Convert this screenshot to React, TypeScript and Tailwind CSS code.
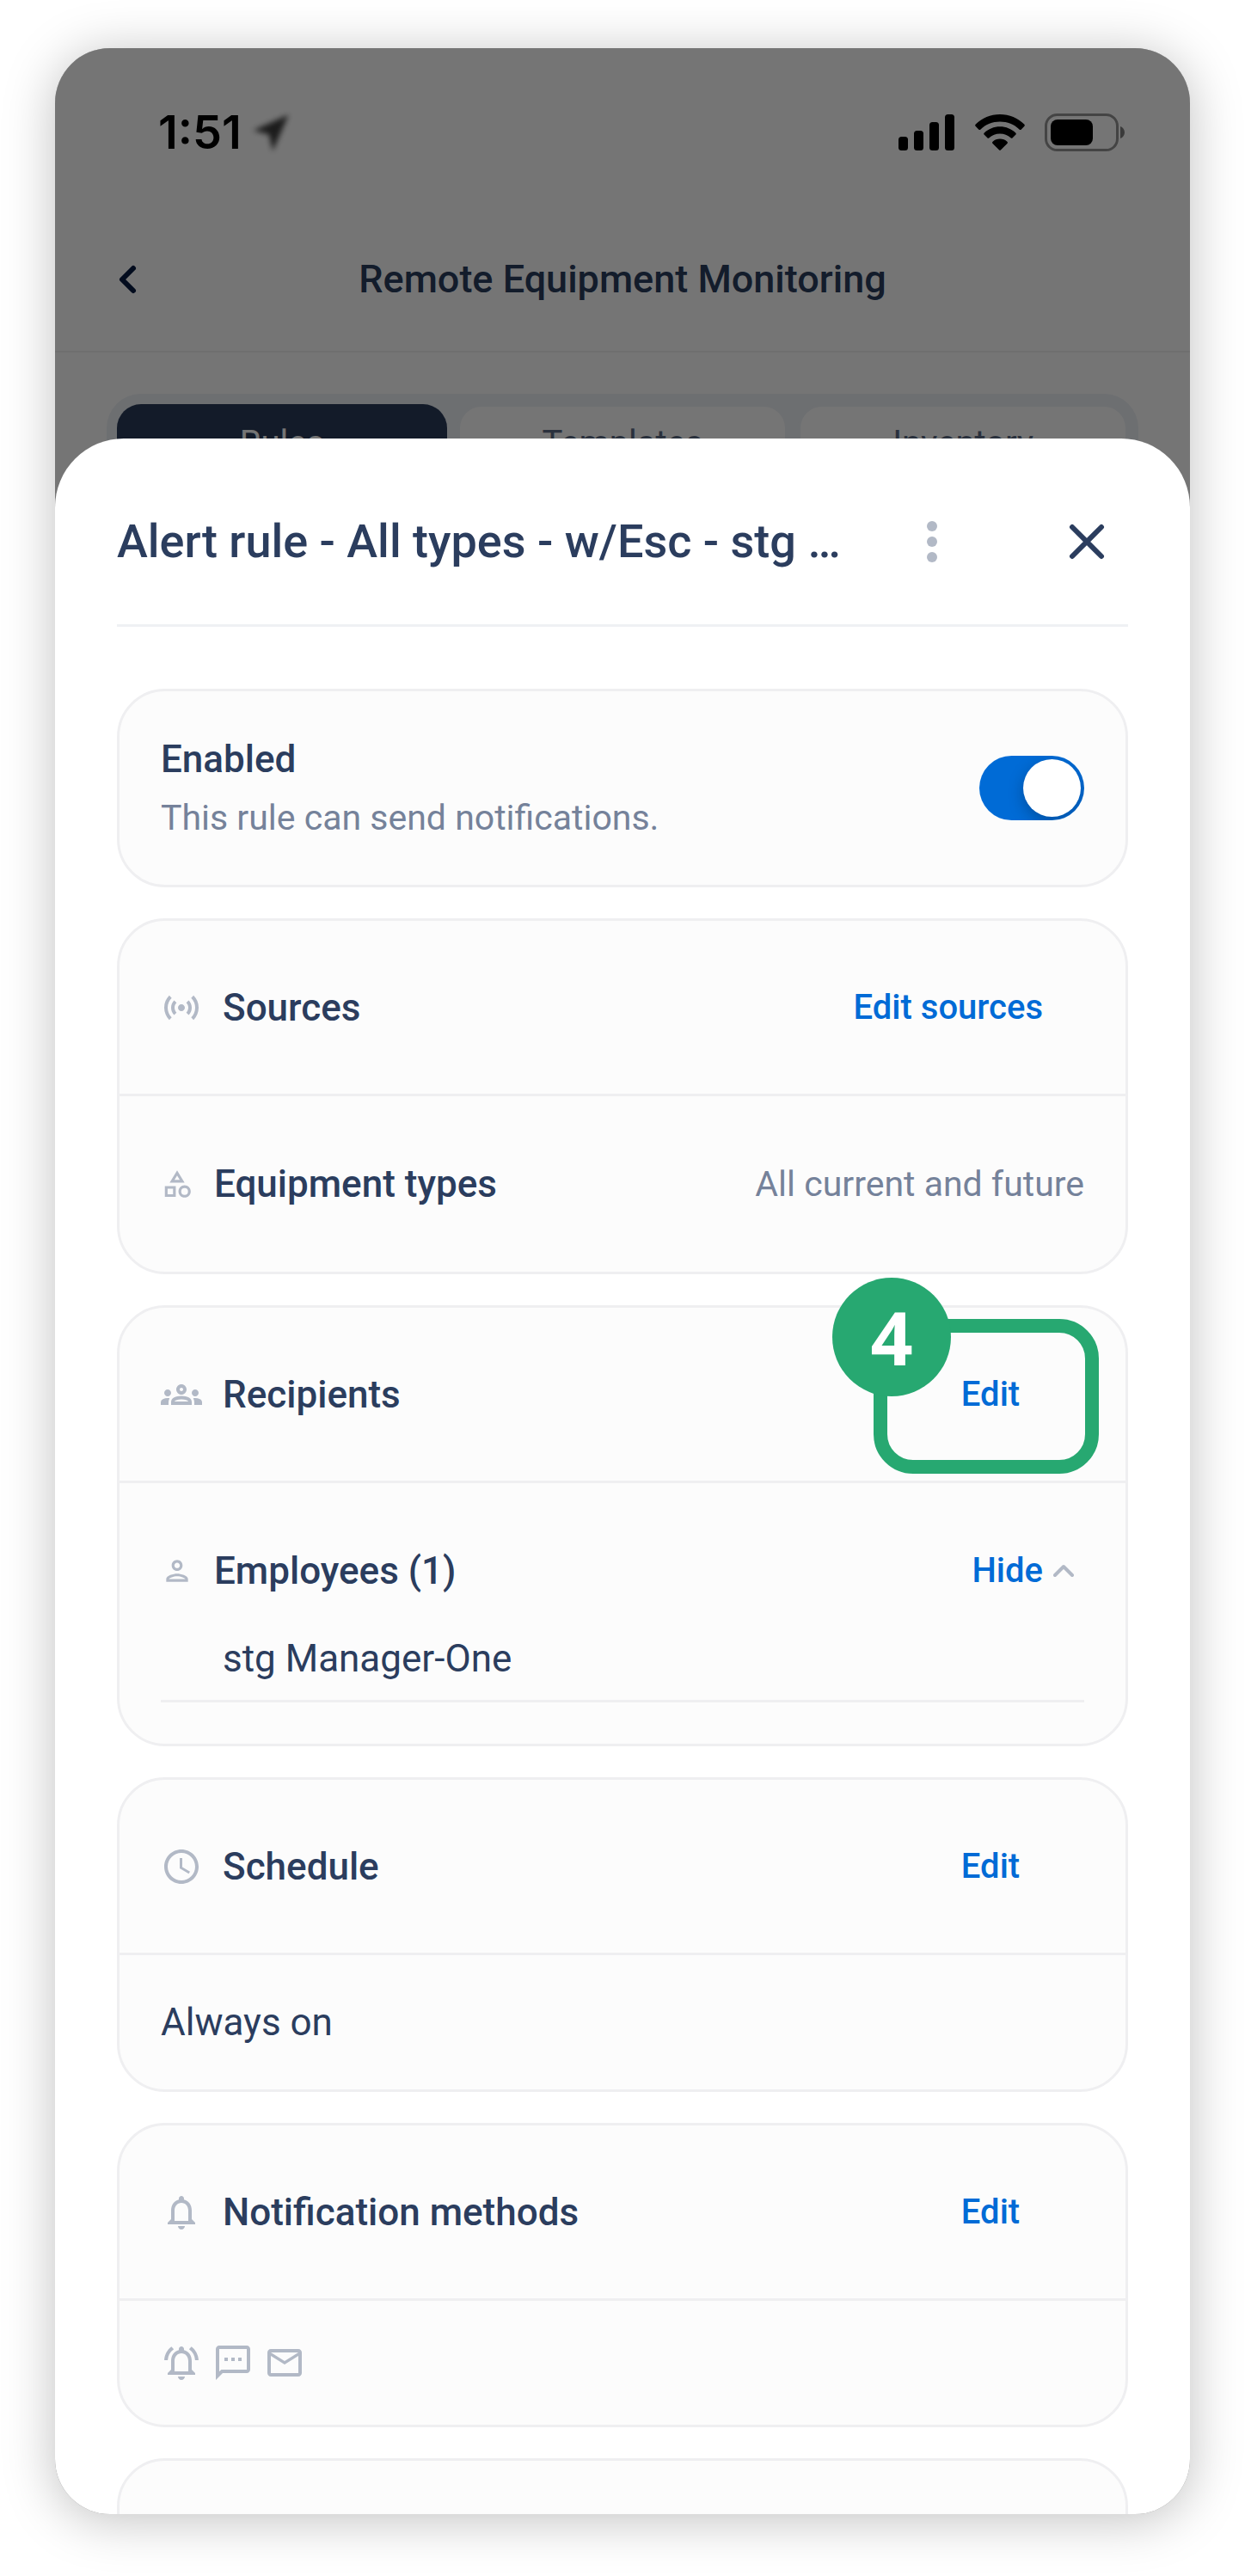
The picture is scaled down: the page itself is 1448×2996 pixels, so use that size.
import { useState } from "react"
import type { ReactNode } from "react"
import {
  MdMailOutline,
  MdOutlineCategory,
  MdOutlineGroups,
  MdOutlineNotifications,
  MdOutlineNotificationsActive,
  MdOutlinePerson,
  MdOutlineSms,
  MdSchedule,
  MdSensors,
} from "react-icons/md"

/** iOS status bar: clock and location arrow on the left, signal / wifi / battery on the right */
function StatusBar() {
  return (
    <div className="flex items-center justify-between pt-[66px] pl-[120px] pr-[75px] h-[130px]">
      <div className="flex items-center gap-2">
        <span className="font-['Inter',sans-serif] text-[54px] leading-[64px] font-semibold text-black">1:51</span>
        <svg viewBox="0 0 48 48" className="size-[52px] blur-[3px]" aria-hidden>
          <path d="M43 5L5 22l17 4 4 18z" fill="#0c0c0c" fillOpacity="0.8" />
        </svg>
      </div>
      <div className="flex items-center gap-[23px]">
        <svg viewBox="0 0 66 42" className="h-[42px] w-[66px]" aria-hidden>
          <rect x="0" y="26" width="11" height="16" rx="3.5" />
          <rect x="18" y="19" width="11" height="23" rx="3.5" />
          <rect x="36" y="9" width="11" height="33" rx="3.5" />
          <rect x="54" y="0" width="11" height="42" rx="3.5" />
        </svg>
        <svg viewBox="0 0 58 42" className="h-[42px] w-[58px]" aria-hidden>
          <path d="M29 0C18 0 8 4.300 .8 11.500c-.8.800-.8 1.700 0 2.500l3.400 3.500c.7.700 1.600.7 2.300 0C12.500 11.800 20.400 8.600 29 8.600s16.500 3.200 22.500 8.900c.7.700 1.600.7 2.300 0l3.400-3.500c.8-.8.8-1.700 0-2.500C50 4.300 40 0 29 0z" />
          <path d="M29 14.200c-7 0-13.400 2.700-18.200 7.200-.8.700-.8 1.600 0 2.400l3.500 3.500c.7.700 1.500.7 2.200 0 3.300-3 7.700-4.800 12.500-4.800s9.200 1.800 12.500 4.800c.7.700 1.500.7 2.200 0l3.500-3.500c.8-.8.8-1.700 0-2.400-4.800-4.500-11.200-7.200-18.200-7.200z" />
          <path d="M29 28.500c-3.200 0-6.200 1.200-8.400 3.200-.7.700-.7 1.500 0 2.200l7.300 7.300c.7.700 1.500.7 2.200 0l7.300-7.300c.7-.7.7-1.500 0-2.200-2.200-2-5.200-3.200-8.400-3.200z" />
        </svg>
        <svg viewBox="0 0 94 44" className="h-[44px] w-[94px]" aria-hidden>
          <rect x="1.500" y="1.500" width="83" height="41" rx="13" fill="none" stroke="#000" strokeOpacity="0.42" strokeWidth="3" />
          <rect x="7" y="7" width="49" height="30" rx="8" />
          <path d="M88 15c3 1 5 4 5 7s-2 6-5 7z" fillOpacity="0.5" />
        </svg>
      </div>
    </div>
  )
}

const tabs = ["Rules", "Templates", "Inventory"]

/** The screen below the sheet, dimmed by the backdrop */
function DimmedScreen() {
  return (
    <div className="relative shrink-0 bg-white">
      <StatusBar />
      <header className="grid grid-cols-[56px_1fr_56px] items-center h-[224px] px-14 pt-14 border-b-2 border-[#f1f1f1]">
        <button type="button" aria-label="Back" className="flex items-center justify-center">
          <svg viewBox="0 0 24 36" className="h-9 w-6" fill="none" stroke="#071b43" strokeWidth="6" strokeLinecap="round" strokeLinejoin="round" aria-hidden>
            <path d="M19 5L6 18l13 13" />
          </svg>
        </button>
        <h1 className="text-center text-[45px] leading-[56px] font-medium">Remote Equipment Monitoring</h1>
      </header>
      <nav className="mx-[60px] mt-12 grid grid-cols-3 gap-3 rounded-[40px] bg-[#edf1f6] p-3">
        {tabs.map((tab) => (
          <button
            key={tab}
            type="button"
            className={
              tab === "Rules"
                ? "h-[92px] rounded-[28px] bg-[#2b3c5b] text-[40px] leading-[48px] text-white"
                : "h-[92px] rounded-[28px] border-[3px] border-[#edf1f6] bg-white text-[40px] leading-[48px] text-[#5d6c86]"
            }
          >
            {tab}
          </button>
        ))}
      </nav>
      <div className="absolute inset-0 bg-black/54" aria-hidden />
    </div>
  )
}

function Card({ children }: { children?: ReactNode }) {
  return (
    <section className="shrink-0 rounded-[56px] border-[3px] border-[#efeff1] bg-[#fcfcfc]">{children}</section>
  )
}

function CardHeader({ icon, title, action }: { icon: ReactNode; title: string; action: ReactNode }) {
  return (
    <div className="flex h-[204px] items-center justify-between border-b-[3px] border-[#efeff1] px-12">
      <div className="flex items-center gap-6">
        <span className="text-5xl text-[#b2b9c6]">{icon}</span>
        <h3 className="text-[44px] leading-[56px] font-medium">{title}</h3>
      </div>
      {action}
    </div>
  )
}

function TextButton({ children }: { children: ReactNode }) {
  return (
    <button type="button" className="min-w-[218px] px-12 text-[40px] leading-[56px] font-medium text-[#006bd6]">
      {children}
    </button>
  )
}

function SubTitle({ icon, children }: { icon: ReactNode; children: ReactNode }) {
  return (
    <div className="flex items-center gap-6">
      <span className="text-[38px] text-[#b2b9c6]">{icon}</span>
      <h4 className="text-[44px] leading-[56px] font-medium">{children}</h4>
    </div>
  )
}

/** Numbered walkthrough marker drawn around a control */
function StepCallout({ step, children }: { step: number; children: ReactNode }) {
  return (
    <div className="relative">
      {children}
      <div className="pointer-events-none absolute -top-[60px] -right-[17px] h-[180px] w-[262px] rounded-[46px] border-[16px] border-[#27a871]" />
      <div className="pointer-events-none absolute -top-[108px] right-[155px] flex size-[138px] items-center justify-center rounded-full bg-[#27a871] font-['Open_Sans',sans-serif] text-[86px] leading-none font-bold text-white">
        {step}
      </div>
    </div>
  )
}

export default function App() {
  const [enabled, setEnabled] = useState(true)
  const [showEmployees, setShowEmployees] = useState(true)

  return (
    <div className="h-screen bg-white px-16 pt-14 pb-[72px] font-['Roboto',sans-serif] text-[#2b3d5e]">
      <main className="flex h-full flex-col overflow-hidden rounded-[64px] bg-[#757575] shadow-[0_6px_60px_rgba(0,0,0,0.25)]">
        <DimmedScreen />

        <div className="relative -mt-16 flex min-h-0 flex-1 flex-col overflow-hidden rounded-t-[80px] bg-white px-[72px]">
          <div className="flex h-[219px] shrink-0 items-center justify-between border-b-[3px] border-[#eff1f4] pt-6">
            <h2 className="text-[54px] leading-[64px] font-medium">Alert rule - All types - w/Esc - stg …</h2>
            <div className="flex items-center gap-[150px] pr-6">
              <button type="button" aria-label="More options">
                <svg viewBox="0 0 12 48" className="h-12 w-3" fill="#b2b9c6" aria-hidden>
                  <circle cx="6" cy="6" r="6" />
                  <circle cx="6" cy="24" r="6" />
                  <circle cx="6" cy="42" r="6" />
                </svg>
              </button>
              <button type="button" aria-label="Close">
                <svg viewBox="0 0 48 48" className="size-12" fill="none" stroke="#2b3d5e" strokeWidth="6" strokeLinecap="round" aria-hidden>
                  <path d="M7 7l34 34M41 7L7 41" />
                </svg>
              </button>
            </div>
          </div>

          <div className="flex flex-col gap-9 pt-[72px]">
            <Card>
              <div className="flex h-[225px] items-center justify-between px-12">
                <div>
                  <label htmlFor="rule-enabled" className="block text-[44px] leading-[56px] font-medium">
                    Enabled
                  </label>
                  <p className="mt-3 text-[41px] leading-[56px] text-[#75829a]">This rule can send notifications.</p>
                </div>
                <div className="relative h-[75px] w-[122px] overflow-hidden rounded-full">
                  <input
                    id="rule-enabled"
                    type="checkbox"
                    role="switch"
                    checked={enabled}
                    onChange={(e) => setEnabled(e.target.checked)}
                    className="peer block size-full cursor-pointer appearance-none bg-[#b2b9c6] checked:bg-[#006bd6]"
                  />
                  <span className="pointer-events-none absolute top-1 left-1 size-[67px] rounded-full bg-white shadow-[0_6px_18px_rgba(0,0,0,0.25)] peer-checked:left-[51px]" />
                </div>
              </div>
            </Card>

            <Card>
              <CardHeader icon={<MdSensors />} title="Sources" action={<TextButton>Edit sources</TextButton>} />
              <div className="flex h-[204px] items-center justify-between px-12">
                <SubTitle icon={<MdOutlineCategory />}>Equipment types</SubTitle>
                <p className="text-[41px] leading-[56px] text-[#75829a]">All current and future</p>
              </div>
            </Card>

            <Card>
              <CardHeader
                icon={<MdOutlineGroups />}
                title="Recipients"
                action={
                  <StepCallout step={4}>
                    <TextButton>Edit</TextButton>
                  </StepCallout>
                }
              />
              <div className="px-12 pt-[74px] pb-12">
                <div className="flex items-center justify-between">
                  <SubTitle icon={<MdOutlinePerson />}>Employees (1)</SubTitle>
                  <button
                    type="button"
                    aria-expanded={showEmployees}
                    onClick={() => setShowEmployees(!showEmployees)}
                    className="flex items-center gap-3 pr-3 text-[40px] leading-[56px] font-medium text-[#006bd6]"
                  >
                    {showEmployees ? "Hide" : "Show"}
                    <svg viewBox="0 0 24 16" className="h-4 w-6" fill="none" stroke="#b2b9c6" strokeWidth="4" strokeLinecap="round" strokeLinejoin="round" aria-hidden>
                      <path d={showEmployees ? "M2 13l10-10 10 10" : "M2 3l10 10 10-10"} />
                    </svg>
                  </button>
                </div>
                {showEmployees && (
                  <ul className="mt-[46px]">
                    <li className="border-b-[3px] border-[#efeff1] pb-5 pl-[72px] text-[44px] leading-[56px]">stg Manager-One</li>
                  </ul>
                )}
              </div>
            </Card>

            <Card>
              <CardHeader icon={<MdSchedule />} title="Schedule" action={<TextButton>Edit</TextButton>} />
              <p className="px-12 py-[50px] text-[44px] leading-[56px]">Always on</p>
            </Card>

            <Card>
              <CardHeader icon={<MdOutlineNotifications />} title="Notification methods" action={<TextButton>Edit</TextButton>} />
              <div className="flex gap-3 px-12 py-12 text-5xl text-[#b2b9c6]">
                <MdOutlineNotificationsActive title="Push" />
                <MdOutlineSms title="Text message" />
                <MdMailOutline title="Email" />
              </div>
            </Card>

            {/* next card, cut off by the end of the screen */}
            <Card>
              <div className="h-[204px]" />
            </Card>
          </div>
        </div>
      </main>
    </div>
  )
}
